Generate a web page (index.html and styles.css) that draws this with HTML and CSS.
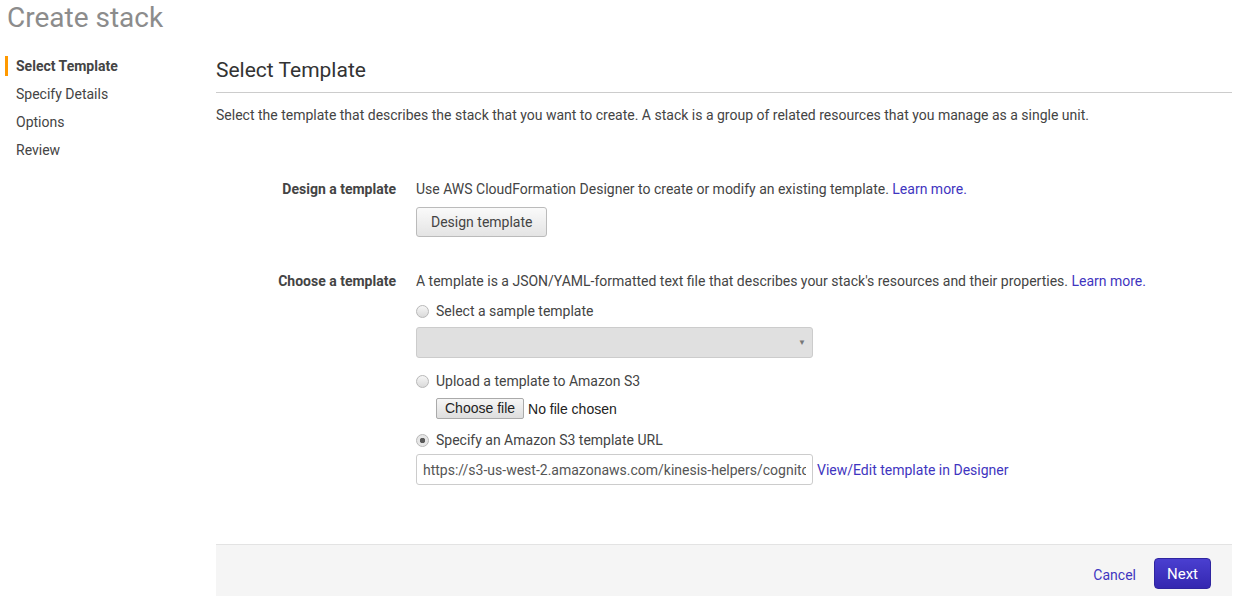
FILE: index.html
```html
<!DOCTYPE html>
<html lang="en">

<head>
    <meta charset="UTF-8">
    <meta name="viewport" content="width=device-width, initial-scale=1.0">
    <title>Create stack</title>
    <link rel="stylesheet" href="styles.css">
</head>

<body>
    <h1 class="page-title">Create stack</h1>
    <div class="wizard">
        <ul class="steps">
            <li class="step active">Select Template</li>
            <li class="step">Specify Details</li>
            <li class="step">Options</li>
            <li class="step">Review</li>
        </ul>
        <div class="panel">
            <h2 class="panel-title">Select Template</h2>
            <p class="panel-desc">Select the template that describes the stack that you want to create. A stack is a group of related resources that you manage as a single unit.</p>

            <div class="form-row design-row">
                <div class="form-label">Design a template</div>
                <div class="form-field">
                    <div class="field-text">Use AWS CloudFormation Designer to create or modify an existing template. <a href="#" class="link">Learn more.</a></div>
                    <button class="btn">Design template</button>
                </div>
            </div>

            <div class="form-row">
                <div class="form-label">Choose a template</div>
                <div class="form-field">
                    <div class="field-text">A template is a JSON/YAML-formatted text file that describes your stack's resources and their properties. <a href="#" class="link">Learn more.</a></div>

                    <label class="radio"><span class="radio-dot"></span>Select a sample template</label>
                    <div class="select"><span class="select-arrow">&#9660;</span></div>

                    <label class="radio after-select"><span class="radio-dot"></span>Upload a template to Amazon S3</label>
                    <div class="file-pick"><span class="file-btn">Choose file</span><span class="file-name">No file chosen</span></div>

                    <label class="radio after-file"><span class="radio-dot checked"></span>Specify an Amazon S3 template URL</label>
                    <div class="url-row">
                        <input class="url-input" type="text" readonly value="https://s3-us-west-2.amazonaws.com/kinesis-helpers/cognito-setup.json">
                        <a href="#" class="link">View/Edit template in Designer</a>
                    </div>
                </div>
            </div>

            <div class="footer">
                <a href="#" class="link cancel">Cancel</a>
                <button class="btn-primary">Next</button>
            </div>
        </div>
    </div>
</body>

</html>
```

FILE: styles.css
```css
body {
    margin: 0;
    font-family: Roboto, "Liberation Sans", sans-serif;
    font-size: 14px;
    color: #444;
    background: #fff;
}

.page-title {
    margin: 0;
    padding: 1px 0 0 7px;
    height: 51px;
    font-size: 28px;
    font-weight: 400;
    color: #8c8c8c;
    line-height: 34px;
}

.wizard {
    display: flex;
}

.steps {
    list-style: none;
    margin: 0;
    padding: 0 0 0 5px;
    width: 211px;
}

.step {
    height: 28px;
    line-height: 28px;
    padding-left: 8px;
    border-left: 3px solid transparent;
}

.step.active {
    font-weight: 700;
    border-left-color: #f90;
    height: 20px;
    line-height: 20px;
    margin: 4px 0;
}

.panel {
    flex: 1;
    margin-right: 18px;
}

.panel-title {
    margin: 0;
    padding-top: 4px;
    height: 36px;
    font-size: 21px;
    font-weight: 400;
    color: #333;
    line-height: 28px;
    border-bottom: 1px solid #ccc;
}

.panel-desc {
    margin: 0;
    padding-top: 12px;
    line-height: 20px;
}

.form-row {
    display: flex;
    gap: 20px;
    margin-top: 54px;
}

.form-row + .form-row {
    margin-top: 34px;
}

.form-label {
    width: 180px;
    text-align: right;
    font-weight: 700;
    line-height: 20px;
}

.form-field {
    flex: 1;
}

.field-text {
    line-height: 20px;
}

.link {
    color: #3f35c0;
    text-decoration: none;
}

.btn {
    margin-top: 8px;
    height: 30px;
    padding: 0 14px;
    font-family: inherit;
    font-size: 14px;
    color: #444;
    border: 1px solid #bbb;
    border-radius: 3px;
    background: linear-gradient(#fafafa, #e4e4e4);
}

.radio {
    display: flex;
    align-items: center;
    margin-top: 10px;
    line-height: 20px;
}

.radio.after-select {
    margin-top: 13px;
}

.radio.after-file {
    margin-top: 11px;
}

.radio-dot {
    width: 13px;
    height: 13px;
    margin: 0 7px 0 0;
    border: 1px solid #b8b8b8;
    border-radius: 50%;
    background: linear-gradient(#f6f6f6, #dadada);
    box-sizing: border-box;
}

.radio-dot.checked {
    background: radial-gradient(circle, #5a5a5a 0 2.5px, #e6e6e6 3px);
}

.select {
    display: flex;
    justify-content: flex-end;
    align-items: center;
    width: 397px;
    height: 31px;
    margin-top: 6px;
    box-sizing: border-box;
    padding-right: 6px;
    border: 1px solid #ccc;
    border-radius: 3px;
    background: #e0e0e0;
}

.select-arrow {
    font-size: 8px;
    color: #777;
}

.file-pick {
    display: flex;
    align-items: center;
    margin: 7px 0 0 20px;
    font-family: "Liberation Sans", Arial, sans-serif;
    font-size: 14px;
    color: #222;
}

.file-btn {
    height: 21px;
    line-height: 19px;
    padding: 0 8px;
    box-sizing: border-box;
    border: 1px solid #aaa;
    border-radius: 2px;
    background: linear-gradient(#f6f6f6, #dedede);
    margin-right: 4px;
}

.url-row {
    display: flex;
    align-items: center;
    gap: 4px;
    margin-top: 4px;
}

.url-input {
    width: 397px;
    height: 31px;
    box-sizing: border-box;
    margin: 0;
    padding: 0 6px;
    font-family: inherit;
    font-size: 14px;
    border: 1px solid #ccc;
    border-radius: 3px;
    color: #555;
    outline: none;
}

.footer {
    display: flex;
    justify-content: flex-end;
    align-items: flex-start;
    gap: 18px;
    margin-top: 59px;
    height: 60px;
    padding: 0 21px 0 0;
    background: #f5f5f5;
    border-top: 1px solid #e3e3e3;
}

.cancel {
    margin-top: 20px;
    line-height: 20px;
}

.btn-primary {
    margin-top: 13px;
    height: 31px;
    padding: 0 12px;
    font-family: inherit;
    font-size: 15px;
    color: #fff;
    border: 1px solid #2f25a0;
    border-radius: 4px;
    background: linear-gradient(#4a3fd0, #3427b0);
}
```
